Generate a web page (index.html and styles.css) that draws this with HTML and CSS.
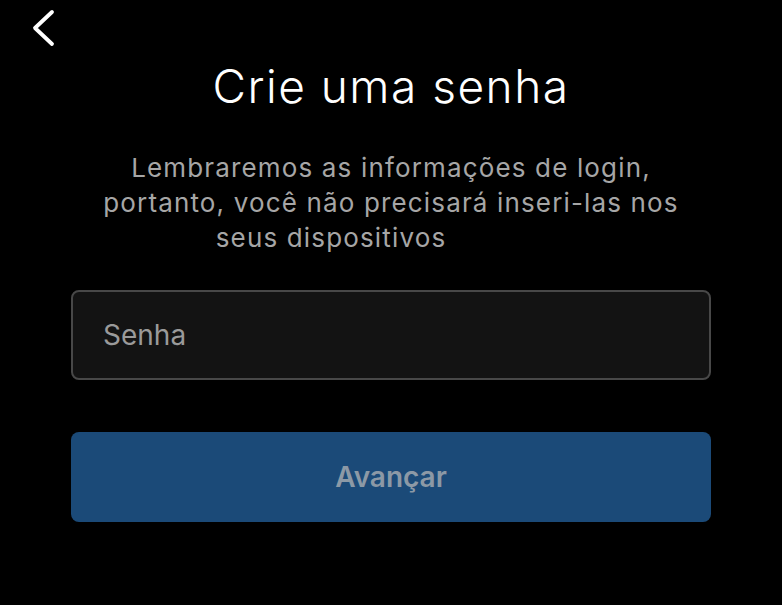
FILE: index.html
```html
<html>
  <head>
    <link rel="stylesheet" href="styles.css">
  </head>
  <body>
    <div class="topbar">
      <button class="back" aria-label="Voltar">
        <svg width="26" height="40" viewBox="0 0 26 40">
          <path d="M20 3 L3 19 L20 35" fill="none" stroke="#fff" stroke-width="3.8" stroke-linecap="round" stroke-linejoin="round"/>
        </svg>
      </button>
    </div>

    <div class="content">
      <h1>Crie uma senha</h1>
      <p class="hint">
        Lembraremos as informações de login,<br>
        portanto, você não precisará inseri-las nos<br>
        <span class="last">seus dispositivos</span>
      </p>

      <input class="field" type="password" placeholder="Senha" />
      <button class="next">Avançar</button>
    </div>
  </body>
</html>
```

FILE: styles.css
```css
body {
  margin: 0;
  background: #000;
  font-family: Inter, "Liberation Sans", sans-serif;
  color: #fff;
}
.topbar {
  height: 56px;
  padding-left: 32px;
  padding-top: 9px;
  box-sizing: border-box;
}
.back {
  background: none;
  border: 0;
  padding: 0;
  display: block;
}
.back svg {
  display: block;
}
.content {
  padding: 0 71px;
  display: flex;
  flex-direction: column;
  align-items: stretch;
}
h1 {
  margin: 4px 0 0;
  font-weight: 300;
  font-size: 46px;
  line-height: 52px;
  letter-spacing: 1.5px;
  text-align: center;
}
.hint {
  margin: 38px 0 0;
  font-size: 26px;
  line-height: 35px;
  letter-spacing: 1.15px;
  color: #a6a6a6;
  text-align: center;
}
.hint .last {
  padding-right: 120px;
}
.field {
  margin-top: 35px;
  height: 90px;
  border: 2px solid #484848;
  border-radius: 8px;
  background: #131313;
  padding: 0 30px;
  font-family: Inter, "Liberation Sans", sans-serif;
  font-size: 28px;
  color: #fff;
  box-sizing: border-box;
  outline: none;
}
.field::placeholder {
  color: #9a9a9a;
}
.next {
  margin-top: 52px;
  height: 90px;
  border: 0;
  border-radius: 8px;
  background: #1b4a78;
  color: #8c99a6;
  font-family: Inter, "Liberation Sans", sans-serif;
  font-weight: 600;
  font-size: 28px;
}
```
